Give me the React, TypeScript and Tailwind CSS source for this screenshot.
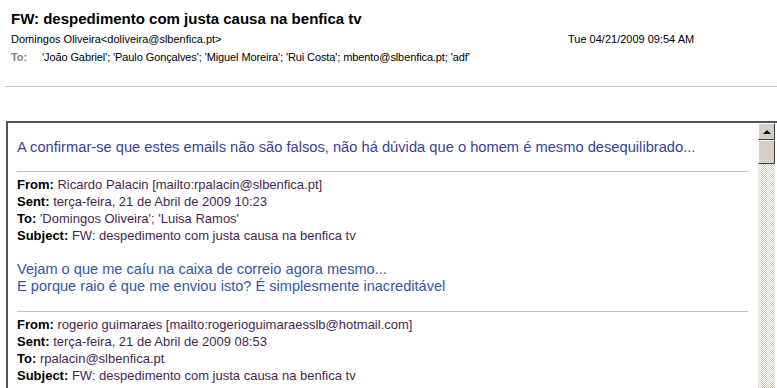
import React from 'react';

const sans = { fontFamily: '"Liberation Sans", Arial, sans-serif' };

type Quoted = {
  from: string;
  sent: string;
  to: string;
  subject: string;
};

const quotes: Quoted[] = [
  {
    from: 'Ricardo Palacin [mailto:rpalacin@slbenfica.pt]',
    sent: 'terça-feira, 21 de Abril de 2009 10:23',
    to: "'Domingos Oliveira'; 'Luisa Ramos'",
    subject: 'FW: despedimento com justa causa na benfica tv',
  },
  {
    from: 'rogerio guimaraes [mailto:rogerioguimaraesslb@hotmail.com]',
    sent: 'terça-feira, 21 de Abril de 2009 08:53',
    to: 'rpalacin@slbenfica.pt',
    subject: 'FW: despedimento com justa causa na benfica tv',
  },
];

function QuoteHeader({ q }: { q: Quoted }) {
  const rows: [string, string][] = [
    ['From:', q.from],
    ['Sent:', q.sent],
    ['To:', q.to],
    ['Subject:', q.subject],
  ];
  return (
    <div className="border-t border-[#b4c6e4] pt-[4px] text-[13px] leading-[17px]">
      {rows.map(([label, value]) => (
        <div key={label} className="whitespace-nowrap">
          <span className="font-bold text-black">{label}</span>{' '}
          <span className="text-[#4a1f4f]">{value}</span>
        </div>
      ))}
    </div>
  );
}

function Scrollbar() {
  return (
    <div className="flex w-[17px] shrink-0 flex-col">
      <div className="flex h-[17px] items-center justify-center border border-t-white border-l-white border-r-[#404040] border-b-[#404040] bg-[#d4d0c8]">
        <div className="h-0 w-0 border-x-[4px] border-b-[4px] border-x-transparent border-b-black" />
      </div>
      <div className="h-[24px] border border-t-white border-l-white border-r-[#404040] border-b-[#404040] bg-[#d4d0c8]" />
      <div className="flex-1 bg-[repeating-conic-gradient(#d4d0c8_0_25%,#ffffff_0_50%)] bg-[length:2px_2px]" />
    </div>
  );
}

export default function App() {
  return (
    <div className="h-[388px] w-[777px] overflow-hidden bg-white" style={sans}>
      <div className="px-[11px] pt-[9px]">
        <div className="text-[15px] font-bold leading-[20px] text-black">
          FW: despedimento com justa causa na benfica tv
        </div>
        <div className="mt-[1px] flex text-[11px] leading-[18px] text-black">
          <span className="w-[557px]">Domingos Oliveira&lt;doliveira@slbenfica.pt&gt;</span>
          <span>Tue 04/21/2009 09:54 AM</span>
        </div>
        <div className="flex text-[11px] leading-[18px] tracking-[-0.1px] text-black">
          <span className="w-[31px] font-bold text-[#808080]">To:</span>
          <span>'João Gabriel'; 'Paulo Gonçalves'; 'Miguel Moreira'; 'Rui Costa'; mbento@slbenfica.pt; 'adf'</span>
        </div>
      </div>
      <div className="ml-[5px] mt-[20px] border-t border-[#c8c8c8]" />

      <div className="ml-[6px] mt-[34px] flex h-[300px] border-2 border-r-0 border-[#555555]">
        <div className="flex-1 pl-[9px] pr-[10px]">
          <div className="pt-[15px] pb-[14px] text-[14.7px] leading-[19px] text-[#3a3f9a]">
            A confirmar-se que estes emails não são falsos, não há dúvida que o homem é mesmo desequilibrado...
          </div>
          <QuoteHeader q={quotes[0]} />
          <div className="pt-[17px] pb-[16px] text-[14.6px] leading-[17px] text-[#3456a8]">
            <div>Vejam o que me caíu na caixa de correio agora mesmo...</div>
            <div>E porque raio é que me enviou isto? É simplesmente inacreditável</div>
          </div>
          <QuoteHeader q={quotes[1]} />
        </div>
        <Scrollbar />
        <div className="w-[2px]" />
      </div>
    </div>
  );
}
